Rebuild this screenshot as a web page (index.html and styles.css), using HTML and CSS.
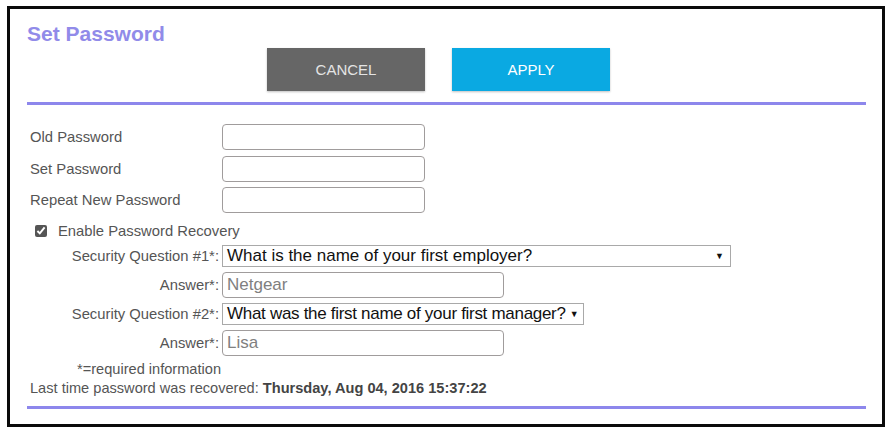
FILE: index.html
```html
<!DOCTYPE html>
<html>
<head>
<meta charset="utf-8">
<title>Set Password</title>
<link rel="stylesheet" href="styles.css">
</head>
<body>
<div class="frame">
  <h1 class="title">Set Password</h1>
  <div class="actions">
    <button class="btn btn-cancel">CANCEL</button>
    <button class="btn btn-apply">APPLY</button>
  </div>
  <div class="rule"></div>

  <div class="pw-form">
    <label class="pw-label">Old Password</label>
    <input class="pw-input" type="password">
    <label class="pw-label">Set Password</label>
    <input class="pw-input" type="password">
    <label class="pw-label">Repeat New Password</label>
    <input class="pw-input" type="password">
  </div>

  <div class="recovery-toggle">
    <input class="check" type="checkbox" checked>
    <span>Enable Password Recovery</span>
  </div>

  <div class="recovery">
    <label class="rq-label">Security Question #1*:</label>
    <div class="select select-wide"><span>What is the name of your first employer?</span><span class="arrow">&#9660;</span></div>
    <label class="rq-label">Answer*:</label>
    <input class="answer" type="text" value="Netgear">
    <label class="rq-label">Security Question #2*:</label>
    <div class="select select-narrow"><span>What was the first name of your first manager?</span><span class="arrow">&#9660;</span></div>
    <label class="rq-label">Answer*:</label>
    <input class="answer" type="text" value="Lisa">
  </div>

  <p class="note">*=required information</p>
  <p class="last">Last time password was recovered: <b>Thursday, Aug 04, 2016 15:37:22</b></p>
  <div class="rule rule-bottom"></div>
</div>
</body>
</html>
```

FILE: styles.css
```css
* { box-sizing: border-box; }

body {
  margin: 0;
  background: #ffffff;
  font-family: "Liberation Sans", Arial, sans-serif;
}

.frame {
  width: 878px;
  height: 421px;
  margin: 6px 0 0 7px;
  border: 3px solid #0a0a0a;
  padding: 13px 16px 0 17px;
  background: #fff;
}

.title {
  margin: 0;
  font-size: 21px;
  line-height: 24px;
  font-weight: bold;
  color: #918be9;
}

.actions {
  display: flex;
  gap: 27px;
  margin: 2px 0 0 240px;
}

.btn {
  width: 158px;
  height: 43px;
  border: none;
  font-family: "Liberation Sans", Arial, sans-serif;
  font-size: 15px;
  padding: 0;
  box-shadow: 0 1px 2px rgba(0,0,0,0.25);
}

.btn-cancel { background: #666666; color: #e4e4e4; }
.btn-apply { background: #0aa9e2; color: #ffffff; }

.rule {
  height: 3px;
  background: #8d87ec;
  margin-top: 11px;
}

.pw-form {
  display: grid;
  grid-template-columns: 192px 203px;
  row-gap: 5.5px;
  margin: 19px 0 0 3px;
  align-items: center;
}

.pw-label {
  font-size: 14.8px;
  color: #555;
}

.pw-input {
  height: 26px;
  border: 1px solid #a09c9c;
  border-radius: 4px;
  margin: 0;
}

.recovery-toggle {
  display: flex;
  align-items: center;
  margin: 10px 0 0 8px;
  font-size: 14.8px;
  color: #555;
}

.check {
  width: 12px;
  height: 12px;
  margin: 0 11px 0 0;
  accent-color: #555;
}

.recovery {
  display: grid;
  grid-template-columns: 195px auto;
  justify-content: start;
  row-gap: 5px;
  margin-top: 6px;
  align-items: center;
  justify-items: start;
}

.rq-label {
  justify-self: end;
  padding-right: 3px;
  font-size: 14.8px;
  color: #555;
}

.select {
  display: flex;
  justify-content: space-between;
  align-items: center;
  height: 22px;
  border: 1px solid #a9a9a9;
  padding: 0 6px 0 4px;
  font-size: 17px;
  color: #111;
  background: #fff;
  white-space: nowrap;
}

.select-wide { width: 509px; }
.select-narrow { width: 362px; letter-spacing: -0.3px; padding-right: 5px; }

.arrow {
  font-size: 9px;
  margin-left: 4px;
  letter-spacing: 0;
}

.answer {
  width: 282px;
  height: 26px;
  margin: 0;
  border: 1px solid #a09c9c;
  border-radius: 4px;
  padding: 0 4px;
  font-family: "Liberation Sans", Arial, sans-serif;
  font-size: 17px;
  color: #808080;
}

.note {
  margin: 4px 0 0 50px;
  font-size: 14.6px;
  color: #555;
  line-height: 18px;
}

.last {
  margin: 1px 0 0 3px;
  font-size: 14.6px;
  color: #555;
  line-height: 18px;
}

.last b { color: #444; }

.rule-bottom {
  margin-top: 9px;
}
```
